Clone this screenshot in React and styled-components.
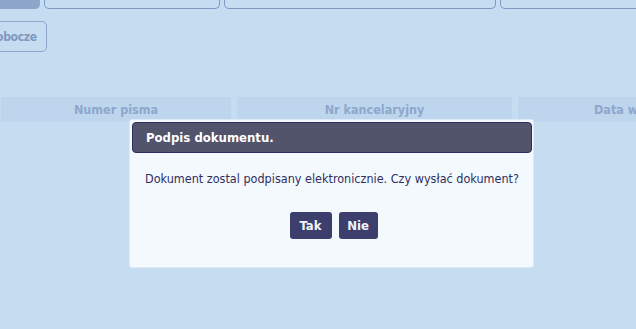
import React from "react";
import styled, { createGlobalStyle } from "styled-components";

const GlobalStyle = createGlobalStyle`
  html, body {
    margin: 0;
    padding: 0;
    background: #c6dcf1;
    overflow: hidden;
  }
  body {
    font-family: "DejaVu Sans Condensed", "DejaVu Sans", sans-serif;
  }
`;

const Page = styled.div`
  position: relative;
  width: 636px;
  height: 329px;
  overflow: hidden;
  background: #c6dcf1;
`;

const TabRow = styled.div`
  display: flex;
  gap: 4px;
  height: 9px;
  margin-left: -20px;
`;

const Tab = styled.div`
  flex: 0 0 ${(p) => p.w}px;
  box-sizing: border-box;
  height: 9px;
  border: 1px solid #7f98c4;
  border-top: none;
  border-radius: 0 0 5px 5px;
  background: ${(p) => (p.active ? "#8ea6c9" : "transparent")};
  border-color: ${(p) => (p.active ? "#8ea6c9" : "#7f98c4")};
`;

const Toolbar = styled.div`
  display: flex;
  margin: 12px 0 0 -22px;
`;

const ToolButton = styled.div`
  height: 31px;
  box-sizing: border-box;
  padding: 0 9px 0 9px;
  display: flex;
  align-items: center;
  border: 1px solid #8ea6cc;
  border-radius: 5px;
  color: #7f98c0;
  font-weight: bold;
  font-size: 12px;
  letter-spacing: -0.3px;
`;

const HeaderRow = styled.div`
  display: grid;
  grid-template-columns: 230px 275px 1fr;
  gap: 6px;
  margin: 45px 0 0 1px;
`;

const HeaderCell = styled.div`
  height: 25px;
  background: #bdd5ed;
  color: #8ea7cb;
  font-weight: bold;
  font-size: 12.5px;
  display: flex;
  align-items: center;
  justify-content: ${(p) => p.align || "center"};
  padding: 0 ${(p) => p.pad || 0}px;
  white-space: nowrap;
  overflow: hidden;
`;

const Dialog = styled.div`
  position: absolute;
  left: 129px;
  top: 119px;
  width: 405px;
  height: 149px;
  box-sizing: border-box;
  padding: 2px 1px 0 2px;
  background: #f4f9fe;
  border: 1px solid #dbe8f6;
  border-radius: 3px;
  display: flex;
  flex-direction: column;
`;

const TitleBar = styled.div`
  height: 31px;
  box-sizing: border-box;
  background: #52546c;
  border: 1px solid #2c2e60;
  border-radius: 4px;
  color: #ffffff;
  font-weight: bold;
  font-size: 13px;
  display: flex;
  align-items: center;
  padding-left: 13px;
`;

const Message = styled.div`
  margin-top: 18px;
  text-align: center;
  color: #2f2f5e;
  font-size: 12.5px;
  line-height: 16px;
`;

const Buttons = styled.div`
  display: flex;
  justify-content: center;
  gap: 7px;
  margin-top: 25px;
  padding-left: 3px;
`;

const Button = styled.button`
  width: ${(p) => p.w}px;
  height: 27px;
  padding: 0;
  border: none;
  border-radius: 3px;
  background: #3c3e6c;
  color: #f2f4fb;
  font-family: inherit;
  font-weight: bold;
  font-size: 13px;
  cursor: pointer;
`;

export default function App() {
  return (
    <>
      <GlobalStyle />
      <Page>
        <TabRow>
          <Tab w={60} active />
          <Tab w={176} />
          <Tab w={272} />
          <Tab w={160} />
        </TabRow>
        <Toolbar>
          <ToolButton>Robocze</ToolButton>
        </Toolbar>
        <HeaderRow>
          <HeaderCell>Numer pisma</HeaderCell>
          <HeaderCell>Nr kancelaryjny</HeaderCell>
          <HeaderCell align="flex-start" pad={76}>
            Data wpływu
          </HeaderCell>
        </HeaderRow>
        <Dialog>
          <TitleBar>Podpis dokumentu.</TitleBar>
          <Message>
            Dokument zostal podpisany elektronicznie. Czy wysłać dokument?
          </Message>
          <Buttons>
            <Button w={42}>Tak</Button>
            <Button w={39}>Nie</Button>
          </Buttons>
        </Dialog>
      </Page>
    </>
  );
}
